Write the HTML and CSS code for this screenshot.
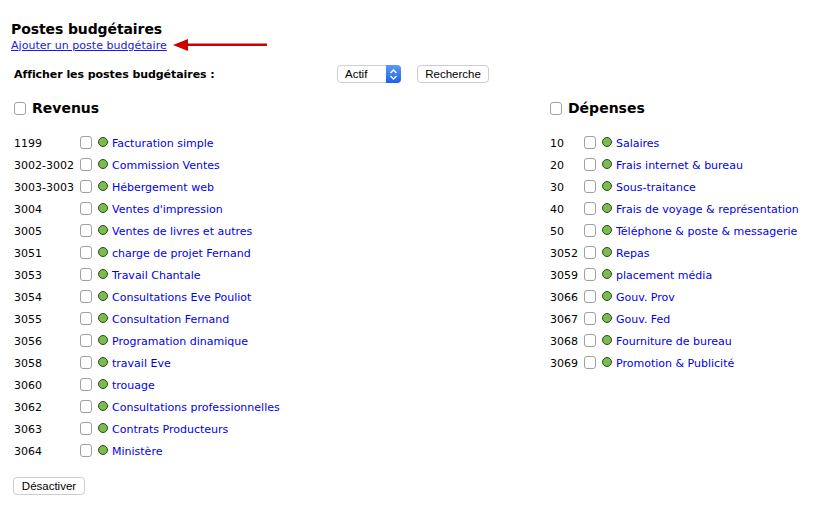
FILE: index.html
```html
<!DOCTYPE html>
<html lang="fr">
<head>
<meta charset="utf-8">
<title>Postes budgétaires</title>
<link rel="stylesheet" href="styles.css">
</head>
<body>
<header class="head">
  <h1>Postes budgétaires</h1>
  <div class="addline">
    <a href="#">Ajouter un poste budgétaire</a>
    <svg class="arrow" width="94" height="14" viewBox="0 0 94 14"><path d="M0 7 L15 1 L15 5.5 L94 5.5 L94 8 L15 8 L15 13 Z" fill="#cc0000"/></svg>
  </div>
</header>
<div class="filter">
  <strong class="filter-label">Afficher les postes budgétaires :</strong>
  <span class="select">Actif<span class="select-btn"><svg width="9" height="13" viewBox="0 0 9 13"><path d="M1.5 5 L4.5 2 L7.5 5 M1.5 8 L4.5 11 L7.5 8" fill="none" stroke="#fff" stroke-width="1.4"/></svg></span></span>
  <button class="btn search">Recherche</button>
</div>
<main class="cols">
  <section class="col col-left">
    <h2><input type="checkbox" class="cb"><span>Revenus</span></h2>
    <ul>
      <li><span class="code">1199</span><input type="checkbox" class="cb"><i class="dot"></i><a href="#">Facturation simple</a></li>
      <li><span class="code">3002-3002</span><input type="checkbox" class="cb"><i class="dot"></i><a href="#">Commission Ventes</a></li>
      <li><span class="code">3003-3003</span><input type="checkbox" class="cb"><i class="dot"></i><a href="#">Hébergement web</a></li>
      <li><span class="code">3004</span><input type="checkbox" class="cb"><i class="dot"></i><a href="#">Ventes d'impression</a></li>
      <li><span class="code">3005</span><input type="checkbox" class="cb"><i class="dot"></i><a href="#">Ventes de livres et autres</a></li>
      <li><span class="code">3051</span><input type="checkbox" class="cb"><i class="dot"></i><a href="#">charge de projet Fernand</a></li>
      <li><span class="code">3053</span><input type="checkbox" class="cb"><i class="dot"></i><a href="#">Travail Chantale</a></li>
      <li><span class="code">3054</span><input type="checkbox" class="cb"><i class="dot"></i><a href="#">Consultations Eve Pouliot</a></li>
      <li><span class="code">3055</span><input type="checkbox" class="cb"><i class="dot"></i><a href="#">Consultation Fernand</a></li>
      <li><span class="code">3056</span><input type="checkbox" class="cb"><i class="dot"></i><a href="#">Programation dinamique</a></li>
      <li><span class="code">3058</span><input type="checkbox" class="cb"><i class="dot"></i><a href="#">travail Eve</a></li>
      <li><span class="code">3060</span><input type="checkbox" class="cb"><i class="dot"></i><a href="#">trouage</a></li>
      <li><span class="code">3062</span><input type="checkbox" class="cb"><i class="dot"></i><a href="#">Consultations professionnelles</a></li>
      <li><span class="code">3063</span><input type="checkbox" class="cb"><i class="dot"></i><a href="#">Contrats Producteurs</a></li>
      <li><span class="code">3064</span><input type="checkbox" class="cb"><i class="dot"></i><a href="#">Ministère</a></li>
    </ul>
  </section>
  <section class="col col-right">
    <h2><input type="checkbox" class="cb"><span>Dépenses</span></h2>
    <ul>
      <li><span class="code">10</span><input type="checkbox" class="cb"><i class="dot"></i><a href="#">Salaires</a></li>
      <li><span class="code">20</span><input type="checkbox" class="cb"><i class="dot"></i><a href="#">Frais internet &amp; bureau</a></li>
      <li><span class="code">30</span><input type="checkbox" class="cb"><i class="dot"></i><a href="#">Sous-traitance</a></li>
      <li><span class="code">40</span><input type="checkbox" class="cb"><i class="dot"></i><a href="#">Frais de voyage &amp; représentation</a></li>
      <li><span class="code">50</span><input type="checkbox" class="cb"><i class="dot"></i><a href="#">Téléphone &amp; poste &amp; messagerie</a></li>
      <li><span class="code">3052</span><input type="checkbox" class="cb"><i class="dot"></i><a href="#">Repas</a></li>
      <li><span class="code">3059</span><input type="checkbox" class="cb"><i class="dot"></i><a href="#">placement média</a></li>
      <li><span class="code">3066</span><input type="checkbox" class="cb"><i class="dot"></i><a href="#">Gouv. Prov</a></li>
      <li><span class="code">3067</span><input type="checkbox" class="cb"><i class="dot"></i><a href="#">Gouv. Fed</a></li>
      <li><span class="code">3068</span><input type="checkbox" class="cb"><i class="dot"></i><a href="#">Fourniture de bureau</a></li>
      <li><span class="code">3069</span><input type="checkbox" class="cb"><i class="dot"></i><a href="#">Promotion &amp; Publicité</a></li>
    </ul>
  </section>
</main>
<footer class="foot"><button class="btn">Désactiver</button></footer>
</body>
</html>
```
FILE: styles.css
```css
* { box-sizing: border-box; }
html, body { margin: 0; background: #fff; }
body {
  width: 830px;
  height: 509px;
  overflow: hidden;
  padding: 21px 0 0 11px;
  font-family: "DejaVu Sans", Verdana, sans-serif;
  font-size: 11px;
  color: #000;
}
a { color: #0000ee; text-decoration: none; }
h1 { margin: 0; font-size: 14px; line-height: 17px; font-weight: bold; letter-spacing: -0.1px; }
.addline { display: flex; align-items: center; height: 14px; line-height: 15px; }
.addline a { text-decoration: underline; color: #1a1ad8; letter-spacing: 0.04px; }
.arrow { margin-left: 6px; }
.filter {
  display: flex;
  align-items: center;
  height: 20px;
  margin-top: 12px;
  padding-left: 2px;
}
.filter-label { flex: none; width: 324px; padding-left: 1px; font-size: 11px; letter-spacing: -0.06px; }
.select {
  position: relative;
  display: flex;
  align-items: center;
  width: 64px;
  height: 18px;
  padding-left: 7px;
  border: 1px solid #cfcfcf;
  border-radius: 4px;
  font: 11.5px "Liberation Sans", Arial, sans-serif;
  background: #fff;
}
.select-btn {
  position: absolute;
  top: -1px;
  right: -1px;
  bottom: -1px;
  width: 15px;
  display: flex;
  align-items: center;
  justify-content: center;
  border-radius: 0 4px 4px 0;
  background: linear-gradient(#5a9cf8, #1a62ea);
}
.btn {
  height: 18px;
  padding: 0 7px;
  border: 1px solid #cdcdcd;
  border-radius: 4px;
  background: #fff;
  color: #000;
  font: 11.5px "Liberation Sans", Arial, sans-serif;
}
.search { margin-left: 16px; width: 72px; padding: 0; }
.foot .btn { width: 72px; padding: 0; }
.cols { display: flex; margin-top: 14px; padding-left: 2px; }
.col { flex: none; width: 536px; }
.col-right { width: 270px; }
.col-right .code { width: 35px; }
h2 {
  display: flex;
  align-items: center;
  height: 20px;
  margin: 0 0 14px;
  font-size: 14px;
  font-weight: bold;
}
h2 .cb { margin: 1px 6px 0 1px; }
ul { margin: 0; padding: 0; list-style: none; }
li { display: flex; align-items: center; height: 22px; white-space: nowrap; }
.code { flex: none; width: 67px; padding-left: 1px; }
.cb {
  appearance: none;
  -webkit-appearance: none;
  flex: none;
  width: 12px;
  height: 13px;
  margin: -2px 6px 0 0;
  border: 1px solid #a0a0a0;
  border-radius: 3px;
  background: #fff;
}
.dot {
  flex: none;
  width: 10px;
  height: 10px;
  margin: -3px 4px 0 0;
  border: 1px solid #2d4a1c;
  border-radius: 50%;
  background: #7cbb50;
}
.foot { margin-top: 15px; padding-left: 2px; }
```
